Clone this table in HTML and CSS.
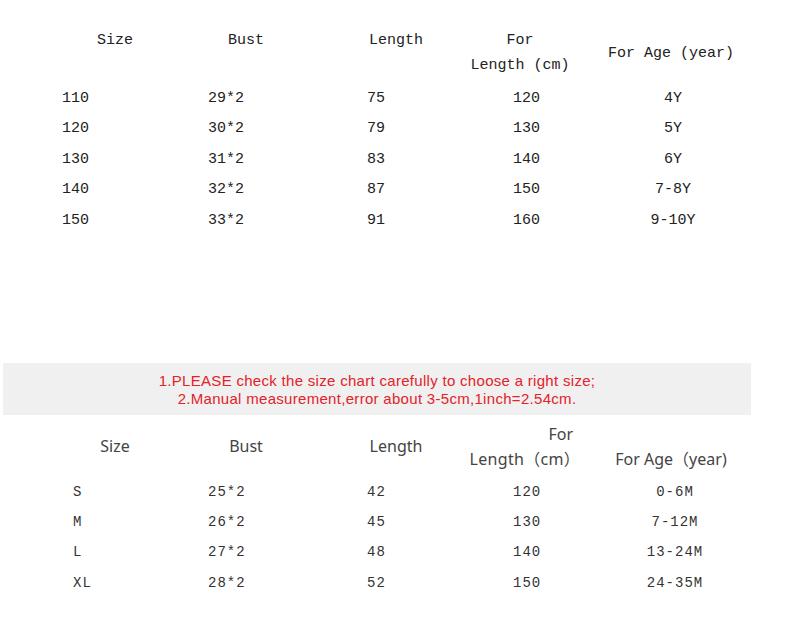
FILE: index.html
```html
<!DOCTYPE html>
<html>
<head>
<meta charset="utf-8">
<link rel="stylesheet" href="styles.css">
</head>
<body>
<section class="chart chart-top">
  <div class="head">
    <div class="h h-mid">Size</div>
    <div class="h h-mid">Bust</div>
    <div class="h h-mid">Length</div>
    <div class="h h-two"><span>For</span><span>Length (cm)</span></div>
    <div class="h h-age">For Age (year)</div>
  </div>
  <div class="rows">
    <div class="row"><span>110</span><span>29*2</span><span>75</span><span>120</span><span class="c5">4Y</span></div>
    <div class="row"><span>120</span><span>30*2</span><span>79</span><span>130</span><span class="c5">5Y</span></div>
    <div class="row"><span>130</span><span>31*2</span><span>83</span><span>140</span><span class="c5">6Y</span></div>
    <div class="row"><span>140</span><span>32*2</span><span>87</span><span>150</span><span class="c5">7-8Y</span></div>
    <div class="row"><span>150</span><span>33*2</span><span>91</span><span>160</span><span class="c5">9-10Y</span></div>
  </div>
</section>

<div class="notice">
  <p>1.PLEASE check the size chart carefully to choose a right size;</p>
  <p>2.Manual measurement,error about 3-5cm,1inch=2.54cm.</p>
</div>

<section class="chart chart-bottom">
  <div class="head">
    <div class="h h-mid">Size</div>
    <div class="h h-mid">Bust</div>
    <div class="h h-mid">Length</div>
    <div class="h h-two h-right"><span>For</span><span class="sub">Length（cm）</span></div>
    <div class="h h-age">For Age（year)</div>
  </div>
  <div class="rows">
    <div class="row"><span class="c1">S</span><span>25*2</span><span>42</span><span>120</span><span class="c5">0-6M</span></div>
    <div class="row"><span class="c1">M</span><span>26*2</span><span>45</span><span>130</span><span class="c5">7-12M</span></div>
    <div class="row"><span class="c1">L</span><span>27*2</span><span>48</span><span>140</span><span class="c5">13-24M</span></div>
    <div class="row"><span class="c1">XL</span><span>28*2</span><span>52</span><span>150</span><span class="c5">24-35M</span></div>
  </div>
</section>
</body>
</html>
```

FILE: styles.css
```css
html, body {
  margin: 0;
  padding: 0;
  background: #ffffff;
}

body {
  width: 800px;
  height: 618px;
  overflow: hidden;
}

.chart .head {
  display: grid;
  grid-template-columns: 100px 162px 138px 110px 192px;
  padding-left: 65px;
  line-height: 25px;
}

.h {
  text-align: center;
  white-space: nowrap;
}

.h-two {
  display: flex;
  flex-direction: column;
  align-items: center;
}

.h-right {
  align-items: flex-end;
  padding-right: 2px;
}

.h-right .sub {
  margin-right: -7px;
  letter-spacing: 0.3px;
}

.rows .row {
  display: grid;
  grid-template-columns: 148px 159px 145px 88px 146px;
  padding-left: 60px;
  height: 30.5px;
  align-items: center;
  white-space: nowrap;
}

.row .c5 {
  text-align: center;
}

/* top chart */
.chart-top {
  padding-top: 28px;
  font-family: "Liberation Mono", "DejaVu Sans Mono", monospace;
  font-size: 15px;
  color: #222;
}

.chart-top .h-mid {
  align-self: start;
}

.chart-top .h-age {
  align-self: center;
}

.chart-top .rows {
  margin-top: 5px;
}

.chart-top .row span:nth-child(1) { padding-left: 2px; }
.chart-top .row span:nth-child(4) { padding-left: 1px; }

/* notice banner */
.notice {
  margin: 127px 0 0 3px;
  width: 748px;
  height: 52px;
  box-sizing: border-box;
  padding-top: 9px;
  background: #f0f0f0;
  text-align: center;
  font-family: "Liberation Sans", Arial, sans-serif;
  font-size: 15px;
  letter-spacing: 0.3px;
  line-height: 18px;
  color: #e3222a;
}

.notice p {
  margin: 0;
}

/* bottom chart */
.chart-bottom {
  margin-top: 7px;
  color: #444;
}

.chart-bottom .head {
  font-family: "Noto Sans", "Noto Sans CJK SC", sans-serif;
  font-size: 16px;
}

.chart-bottom .h-mid {
  align-self: center;
}

.chart-bottom .h-age {
  align-self: end;
}

.chart-bottom .rows {
  margin-top: 5px;
  font-family: "Liberation Mono", "DejaVu Sans Mono", monospace;
  font-size: 14px;
  color: #333;
}

.chart-bottom .row {
  height: 30.33px;
}

.chart-bottom .row span {
  letter-spacing: 1px;
}

.chart-bottom .row .c1 {
  padding-left: 13px;
}

.chart-bottom .row span:nth-child(4) { padding-left: 1px; }
.chart-bottom .row .c5 { padding-left: 4px; }
```
